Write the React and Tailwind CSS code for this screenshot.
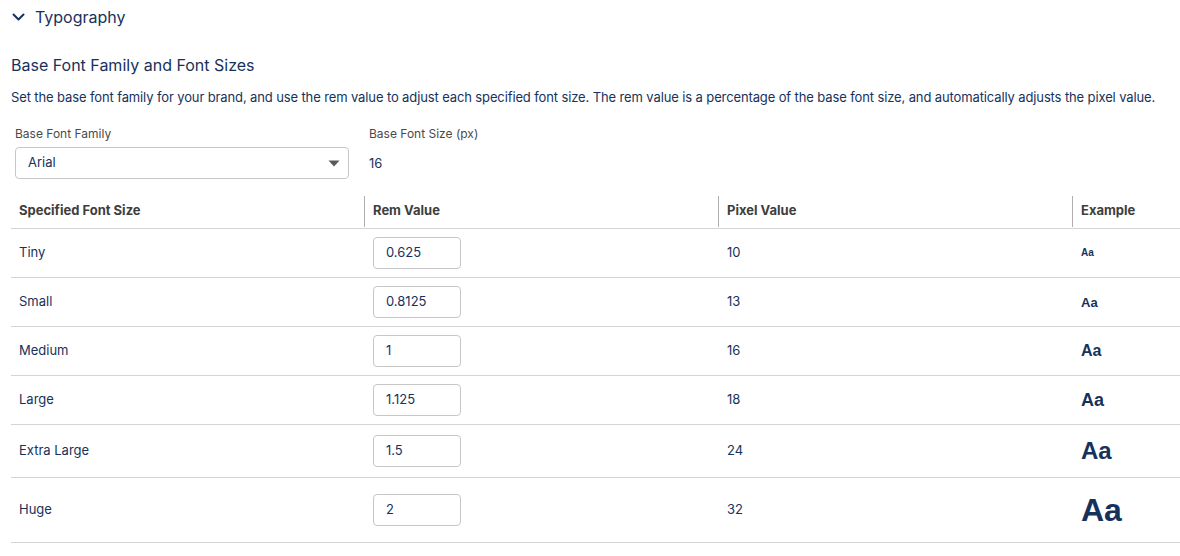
import React from "react";

const rows = [
  { name: "Tiny", rem: "0.625", px: 10, ex: "text-[10px]", h: "h-[49px]" },
  { name: "Small", rem: "0.8125", px: 13, ex: "text-[13px]", h: "h-[49px]" },
  { name: "Medium", rem: "1", px: 16, ex: "text-[16px]", h: "h-[49px]" },
  { name: "Large", rem: "1.125", px: 18, ex: "text-[18px]", h: "h-[49px]" },
  { name: "Extra Large", rem: "1.5", px: 24, ex: "text-[24px]", h: "h-[53px]" },
  { name: "Huge", rem: "2", px: 32, ex: "text-[32px]", h: "h-[65px]" },
];

export default function App() {
  return (
    <div className="w-[1180px] h-[556px] bg-white overflow-hidden text-[#16325c] font-['Inter','Liberation_Sans',sans-serif]">
      <div className="h-[34px] flex items-center pl-[12px]">
        <svg width="13" height="9" viewBox="0 0 13 9" className="mr-[10px]">
          <path d="M1.5 1.5 L6.5 6.5 L11.5 1.5" fill="none" stroke="#16325c" strokeWidth="2" strokeLinecap="round" strokeLinejoin="round" />
        </svg>
        <span className="text-[16px]">Typography</span>
      </div>
      <div className="pl-[11px]">
        <div className="mt-[20px] text-[16px] leading-[22px]">Base Font Family and Font Sizes</div>
        <div className="mt-[11px] text-[13px] leading-[20px] tracking-[-0.12px]">
          Set the base font family for your brand, and use the rem value to adjust each specified font size. The rem value is a percentage of the base font size, and automatically adjusts the pixel value.
        </div>
        <div className="flex mt-[19px] pl-[4px]">
          <div className="w-[354px]">
            <div className="text-[12px] leading-[16px] text-[#4a4a4a]">Base Font Family</div>
            <div className="mt-[5px] w-[334px] h-[32px] border border-[#c9c7c5] rounded-[4px] flex items-center justify-between pl-[12px] pr-[8px] text-[13px]">
              <span>Arial</span>
              <svg width="12" height="7" viewBox="0 0 12 7">
                <path d="M0.5 0.5 L11.5 0.5 L6 6.5 Z" fill="#5a5a5a" />
              </svg>
            </div>
          </div>
          <div>
            <div className="text-[12px] leading-[16px] text-[#4a4a4a]">Base Font Size (px)</div>
            <div className="mt-[12px] text-[13px]">16</div>
          </div>
        </div>
        <div className="mt-[15px]">
          <div className="grid grid-cols-[353px_354px_354px_1fr] h-[35px] items-center border-b border-[#d4d4d4] text-[13px] font-bold text-[#3e3e3c]">
            <div className="pl-[8px]">Specified Font Size</div>
            <div className="h-[31px] border-l border-[#b0adab] pl-[8px] flex items-center">Rem Value</div>
            <div className="h-[31px] border-l border-[#b0adab] pl-[8px] flex items-center">Pixel Value</div>
            <div className="h-[31px] border-l border-[#b0adab] pl-[8px] flex items-center">Example</div>
          </div>
          {rows.map((r) => (
            <div key={r.name} className={`grid grid-cols-[353px_354px_354px_1fr] items-center border-b border-[#d4d4d4] text-[13px] ${r.h}`}>
              <div className="pl-[8px]">{r.name}</div>
              <div className="pl-[9px]">
                <div className="w-[88px] h-[32px] border border-[#c9c7c5] rounded-[4px] flex items-center pl-[12px]">{r.rem}</div>
              </div>
              <div className="pl-[9px]">{r.px}</div>
              <div className={`pl-[9px] font-bold font-['Liberation_Sans',Arial,sans-serif] leading-none ${r.ex}`}>Aa</div>
            </div>
          ))}
        </div>
      </div>
    </div>
  );
}
